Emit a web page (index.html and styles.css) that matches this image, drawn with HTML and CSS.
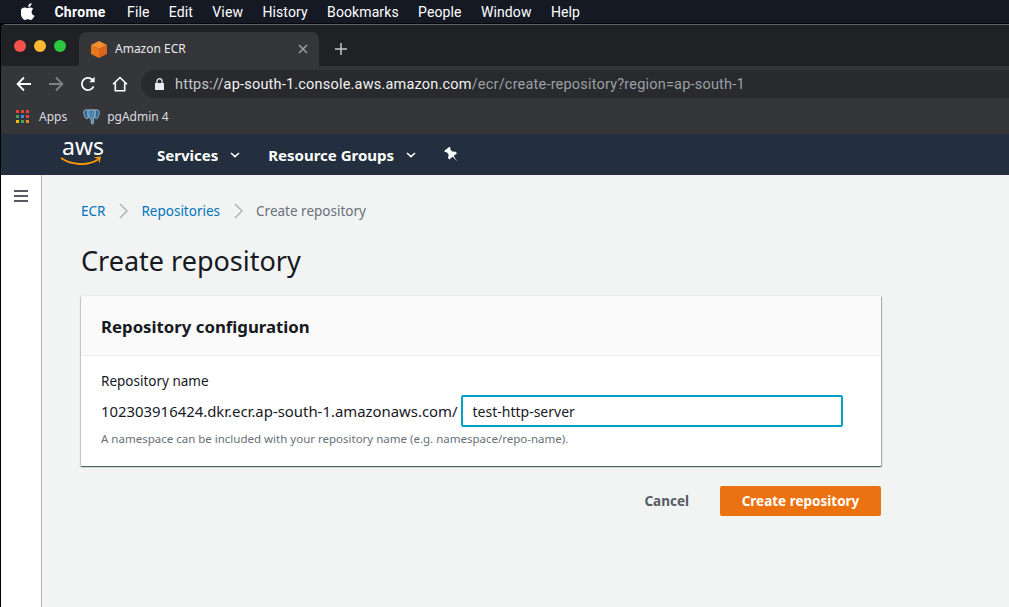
FILE: index.html
```html
<!DOCTYPE html>
<html>
<head>
  <title>Amazon ECR</title>
  <link rel="stylesheet" href="styles.css">
</head>
<body>
  <div class="menubar">
    <svg class="apple" width="14" height="17" viewBox="0 0 14 17"><path fill="#fff" d="M10.6 0c.1 1-.3 2-.9 2.700-.6.700-1.500 1.300-2.500 1.200-.1-1 .4-2 .9-2.600C8.700.6 9.700.1 10.600 0zM13.700 12.500c-.4.900-.6 1.300-1.100 2.100-.7 1.100-1.700 2.400-2.900 2.400-1.100 0-1.400-.7-2.800-.7s-1.800.7-2.900.7c-1.200 0-2.100-1.200-2.800-2.300C-.8 11.700-1 8.300.1 6.500c.8-1.300 2.100-2 3.300-2 1.200 0 2 .7 3 .7s1.600-.7 3-.7c1.100 0 2.200.6 3 1.600-2.600 1.400-2.200 5.200.3 6.400z"/></svg>
    <span class="menu-app">Chrome</span>
    <span>File</span>
    <span>Edit</span>
    <span>View</span>
    <span>History</span>
    <span>Bookmarks</span>
    <span>People</span>
    <span>Window</span>
    <span>Help</span>
  </div>

  <div class="window">
    <div class="tabstrip">
      <div class="lights">
        <i class="light red"></i>
        <i class="light yellow"></i>
        <i class="light green"></i>
      </div>
      <div class="tab">
        <svg width="16" height="17" viewBox="0 0 16 17"><path fill="#f58f2c" d="M8 0l8 4-8 4-8-4z"/><path fill="#e9771d" d="M0 4l8 4v9l-8-4z"/><path fill="#d9661a" d="M16 4l-8 4v9l8-4z"/></svg>
        <span class="tab-title">Amazon ECR</span>
        <svg class="tab-close" width="10" height="10" viewBox="0 0 10 10"><path stroke="#9aa0a6" stroke-width="1.500" d="M1 1l8 8M9 1l-8 8"/></svg>
      </div>
      <svg class="newtab" width="12" height="12" viewBox="0 0 12 12"><path stroke="#c4c7ca" stroke-width="1.500" d="M6 0v12M0 6h12"/></svg>
    </div>

    <div class="toolbar">
      <svg class="navicon" width="16" height="16" viewBox="0 0 16 16"><path fill="none" stroke="#fff" stroke-width="1.800" d="M15 8H2M8 1.500L1.600 8 8 14.500"/></svg>
      <svg class="navicon" width="16" height="16" viewBox="0 0 16 16"><path fill="none" stroke="#808386" stroke-width="1.800" d="M1 8h13M8 1.500L14.400 8 8 14.500"/></svg>
      <svg class="navicon" width="16" height="16" viewBox="0 0 16 16"><path fill="none" stroke="#fff" stroke-width="1.800" d="M13.600 10.300A6.100 6.100 0 1 1 12.300 3.700"/><path fill="#fff" d="M14.600.8v5.500H9.100z"/></svg>
      <svg class="navicon navicon-home" width="16" height="16" viewBox="0 0 16 16"><path fill="none" stroke="#fff" stroke-width="1.600" d="M1 8.300L8 1.500l7 6.800M3.300 7v7.700h9.400V7"/></svg>
      <div class="omnibox">
        <svg width="9" height="12" viewBox="0 0 9 12"><path fill="#e8eaed" d="M0 5h9v7H0z"/><path fill="none" stroke="#e8eaed" stroke-width="1.300" d="M2 5.500V3.200a2.500 2.500 0 0 1 5 0v2.300"/></svg>
        <span class="url"><span class="url-scheme">https://</span>ap-south-1.console.aws.amazon.com<span class="url-dim">/ecr/create-repository?region=ap-south-1</span></span>
      </div>
    </div>

    <div class="bookmarks">
      <svg width="13" height="13" viewBox="0 0 13 13">
        <path fill="#ea4335" d="M0 0h3v3H0zM5 0h3v3H5zM10 0h3v3h-3z"/>
        <path fill="#34a853" d="M0 5h3v3H0z"/>
        <path fill="#4285f4" d="M5 5h3v3H5z"/>
        <path fill="#ea4335" d="M10 5h3v3h-3z"/>
        <path fill="#fbbc05" d="M0 10h3v3H0z"/>
        <path fill="#34a853" d="M5 10h3v3H5z"/>
        <path fill="#f28b1e" d="M10 10h3v3h-3z"/>
      </svg>
      <span class="bm-apps">Apps</span>
      <svg class="bm-elephant" width="17" height="16" viewBox="0 0 17 16">
        <path fill="#336791" stroke="#c5d6e3" stroke-width=".7" d="M5.500 1C3 .3.700 1 .7 3.200c0 2 1 4.700 2 6 .7.900 1.700.700 2.300-.2z"/>
        <path fill="#336791" stroke="#c5d6e3" stroke-width=".7" d="M11.500 1c2.500-.7 4.800 0 4.800 2.200 0 2-1 4.700-2 6-.7.900-1.700.700-2.300-.2z"/>
        <path fill="#4a86b0" stroke="#c5d6e3" stroke-width=".7" d="M5 1.200c1.800-.7 5.200-.7 7 0 .5 3 0 6-1.300 7.800l-.5 5.500c-.3 1-1.400 1-1.700 0L8 10.500 6.300 9C5 7.200 4.500 4 5 1.200z"/>
      </svg>
      <span>pgAdmin 4</span>
    </div>

    <nav class="awsnav">
      <div class="awslogo">
        <span class="awslogo-text">aws</span>
        <svg width="42" height="10" viewBox="0 0 42 10"><path fill="none" stroke="#f90" stroke-width="1.800" d="M1 2c11 7.500 27 8 37 1.500"/><path fill="#f90" d="M33.500 1.200L41 .6l-1.500 7-1.400-4.700z"/></svg>
      </div>
      <span class="navlink">Services</span>
      <svg class="caret" width="10" height="6" viewBox="0 0 10 6"><path fill="none" stroke="#fff" stroke-width="1.600" d="M1 1l4 3.600L9 1"/></svg>
      <span class="navlink navlink-rg">Resource Groups</span>
      <svg class="caret" width="10" height="6" viewBox="0 0 10 6"><path fill="none" stroke="#fff" stroke-width="1.600" d="M1 1l4 3.600L9 1"/></svg>
      <svg class="pin" width="16" height="16" viewBox="0 0 16 16"><g transform="rotate(-40 8 8)"><path fill="#fff" d="M4.500 0h7v1.300L10.300 2.500v3l2.700 2.300v2H3V7.800l2.700-2.300v-3L4.500 1.300z"/><path fill="#fff" d="M7.300 9.500h1.400L8 16z"/></g></svg>
    </nav>

    <div class="page">
      <aside class="rail">
        <div class="burger"><i></i><i></i><i></i></div>
      </aside>
      <main class="main">
        <div class="breadcrumb">
          <a>ECR</a>
          <svg width="9" height="16" viewBox="0 0 9 16"><path fill="none" stroke="#aab7b8" stroke-width="1.500" d="M1 1l7 7-7 7"/></svg>
          <a>Repositories</a>
          <svg width="9" height="16" viewBox="0 0 9 16"><path fill="none" stroke="#aab7b8" stroke-width="1.500" d="M1 1l7 7-7 7"/></svg>
          <span>Create repository</span>
        </div>
        <h1>Create repository</h1>
        <section class="card">
          <div class="card-head">
            <h2>Repository configuration</h2>
          </div>
          <div class="card-body">
            <label for="repo">Repository name</label>
            <div class="repo-row">
              <span class="repo-prefix">102303916424.dkr.ecr.ap-south-1.amazonaws.com/</span>
              <input id="repo" class="repo-input" type="text" value="test-http-server">
            </div>
            <p class="hint">A namespace can be included with your repository name (e.g. namespace/repo-name).</p>
          </div>
        </section>
        <div class="actions">
          <button class="btn-cancel">Cancel</button>
          <button class="btn-create">Create repository</button>
        </div>
      </main>
    </div>
  </div>
</body>
</html>
```

FILE: styles.css
```css
* {
  box-sizing: border-box;
}

html,
body {
  margin: 0;
  height: 607px;
  overflow: hidden;
}

body {
  display: flex;
  flex-direction: column;
  background-color: #000;
  font-family: "Noto Sans", sans-serif;
}

.menubar {
  display: flex;
  align-items: center;
  gap: 19.4px;
  height: 24px;
  padding-left: 21px;
  border-bottom: 1px solid #05070c;
  background-color: #141924;
  color: #fff;
  font-family: Roboto, sans-serif;
  font-size: 14px;
  letter-spacing: 0.1px;
}

.menu-app {
  margin-right: 2px;
  font-weight: bold;
  letter-spacing: 0.3px;
}

.window {
  flex: 1;
  display: flex;
  flex-direction: column;
  margin-left: 1px;
  border-top: 1px solid #5f6163;
  border-radius: 5px 0 0 0;
  overflow: hidden;
  min-height: 0;
}

.tabstrip {
  display: flex;
  align-items: flex-end;
  height: 41px;
  background-color: #202124;
}

.lights {
  display: flex;
  align-self: center;
  gap: 8px;
  width: 78px;
  padding-left: 13px;
}

.light {
  width: 12px;
  height: 12px;
  border-radius: 50%;
}

.red {
  background-color: #f4504c;
}

.yellow {
  background-color: #fbb72f;
}

.green {
  background-color: #2ac73f;
}

.tab {
  display: flex;
  align-items: center;
  width: 240px;
  height: 34px;
  padding: 0 11px 0 12px;
  border-radius: 8px 8px 0 0;
  background-color: #35363a;
  color: #e8eaed;
  font-size: 12px;
}

.tab-title {
  flex: 1;
  margin-left: 8px;
  padding-bottom: 2px;
}

.newtab {
  align-self: center;
  margin: 6px 0 0 16px;
}

.toolbar {
  display: flex;
  align-items: center;
  height: 33px;
  padding: 2px 0 0 15px;
  background-color: #35363a;
}

.navicon {
  margin-right: 16px;
}

.navicon-home {
  margin-right: 13px;
}

.omnibox {
  flex: 1;
  display: flex;
  align-items: center;
  gap: 11px;
  height: 28px;
  padding-left: 14px;
  border-radius: 14px 0 0 14px;
  background-color: #292a2d;
  color: #f1f3f4;
  font-family: Roboto, sans-serif;
  font-size: 14.500px;
  letter-spacing: 0.2px;
}

.url {
  padding-top: 2px;
}

.url-scheme {
  color: #c4c7ca;
}

.url-dim {
  color: #9aa0a6;
}

.bookmarks {
  display: flex;
  align-items: center;
  height: 35px;
  padding-left: 15px;
  background-color: #35363a;
  color: #dadce0;
  font-size: 12px;
}

.bm-apps {
  margin-left: 10px;
}

.bm-elephant {
  margin: 0 7px 0 16px;
}

.awsnav {
  display: flex;
  align-items: center;
  height: 41px;
  padding-left: 59px;
  background-color: #232f3e;
  color: #fff;
}

.awslogo {
  display: flex;
  flex-direction: column;
  width: 42px;
  margin: -6px 55px 0 0;
}

.awslogo-text {
  height: 19px;
  padding-left: 2px;
  font-size: 23px;
  line-height: 19px;
}

.navlink {
  font-size: 15px;
  font-weight: bold;
}

.navlink-rg {
  margin-left: 28px;
}

.caret {
  margin-left: 12px;
}

.pin {
  margin-left: 28px;
}

.page {
  flex: 1;
  display: flex;
  min-height: 0;
  background-color: #f2f3f3;
}

.rail {
  width: 41px;
  border-right: 1px solid #aab7b8;
  background-color: #fff;
}

.burger {
  display: flex;
  flex-direction: column;
  gap: 3px;
  width: 14px;
  margin: 15px 0 0 13px;
}

.burger i {
  height: 2px;
  background-color: #545b64;
}

.main {
  flex: 1;
  padding: 26px 128px 0 39px;
}

.breadcrumb {
  display: flex;
  align-items: center;
  gap: 13.500px;
  height: 20px;
  color: #687078;
  font-size: 13.500px;
}

.breadcrumb a {
  color: #0073bb;
}

h1 {
  margin: 20px 0 0;
  color: #16191f;
  font-size: 27px;
  font-weight: normal;
  line-height: 40px;
}

.card {
  margin-top: 15px;
  background-color: #fff;
  box-shadow: 0 -1px 0 0 #eaeded, 0 1px 1px 0 rgba(0, 28, 36, 0.5), 1px 1px 1px 0 rgba(0, 28, 36, 0.25), -1px 1px 1px 0 rgba(0, 28, 36, 0.12);
}

.card-head {
  height: 60px;
  padding: 20px 20px 0;
  border-bottom: 1px solid #eaeded;
  background-color: #fafafa;
}

.card-head h2 {
  margin: 0;
  color: #16191f;
  font-size: 16.800px;
  line-height: 22px;
}

.card-body {
  height: 110px;
  padding: 15px 20px 0;
}

.card-body label {
  display: block;
  color: #16191f;
  font-size: 13.500px;
  line-height: 20px;
}

.repo-row {
  display: flex;
  align-items: center;
  gap: 3px;
  margin-top: 4px;
}

.repo-prefix {
  color: #16191f;
  font-size: 14.900px;
}

.repo-input {
  width: 382px;
  height: 32px;
  padding: 0 10px;
  border: 2px solid #00a1c9;
  border-radius: 2px;
  outline: none;
  color: #16191f;
  font-family: "Noto Sans", sans-serif;
  font-size: 14px;
}

.hint {
  margin: 4px 0 0;
  color: #687078;
  font-size: 11.500px;
  line-height: 16px;
}

.actions {
  display: flex;
  justify-content: flex-end;
  align-items: center;
  gap: 31px;
  margin-top: 20px;
}

.actions button {
  height: 30px;
  border: none;
  font-family: "Noto Sans", sans-serif;
  font-size: 13.500px;
  font-weight: bold;
}

.btn-cancel {
  padding: 0;
  background: none;
  color: #545b64;
}

.btn-create {
  width: 161px;
  border-radius: 2px;
  background-color: #ec7211;
  color: #fff;
}
```
